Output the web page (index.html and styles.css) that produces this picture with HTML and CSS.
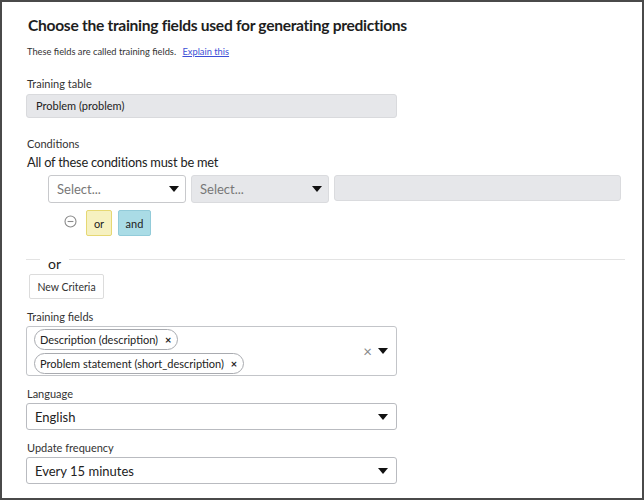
FILE: index.html
```html
<!DOCTYPE html>
<html lang="en">
<head>
  <meta charset="UTF-8">
  <meta name="viewport" content="width=device-width, initial-scale=1">
  <title>Training fields</title>
  <link rel="stylesheet" href="styles.css">
</head>
<body>
  <div class="page">
    <h1>Choose the training fields used for generating predictions</h1>
    <p class="hint">These fields are called training fields. <a href="#">Explain this</a></p>

    <div class="label label-first">Training table</div>
    <div class="field readonly">Problem (problem)</div>

    <div class="label label-cond">Conditions</div>
    <div class="cond-title">All of these conditions must be met</div>

    <div class="cond-row">
      <div class="select small">
        <span class="placeholder">Select...</span>
        <span class="caret"></span>
      </div>
      <div class="select small disabled">
        <span class="placeholder">Select...</span>
        <span class="caret"></span>
      </div>
      <div class="value-box"></div>
    </div>

    <div class="cond-actions">
      <svg class="remove-icon" width="13" height="13" viewBox="0 0 13 13">
        <circle cx="6.5" cy="6.5" r="5.5" fill="none" stroke="#8a8a8a" stroke-width="1.1"/>
        <line x1="3.6" y1="6.5" x2="9.4" y2="6.5" stroke="#8a8a8a" stroke-width="1.1"/>
      </svg>
      <button class="btn-or">or</button>
      <button class="btn-and">and</button>
    </div>

    <div class="divider"><span>or</span></div>
    <button class="btn-new">New Criteria</button>

    <div class="label">Training fields</div>
    <div class="multi">
      <div class="chips">
        <span class="chip">Description (description) <b>×</b></span>
        <span class="chip">Problem statement (short_description) <b>×</b></span>
      </div>
      <span class="clear">×</span>
      <span class="caret"></span>
    </div>

    <div class="label">Language</div>
    <div class="select wide">
      <span>English</span>
      <span class="caret"></span>
    </div>

    <div class="label">Update frequency</div>
    <div class="select wide">
      <span>Every 15 minutes</span>
      <span class="caret"></span>
    </div>
  </div>
</body>
</html>
```

FILE: styles.css
```css
body {
  margin: 0;
  font-family: Lato, 'Open Sans', sans-serif;
  color: #222;
  background: #fff;
}

.page {
  height: 500px;
  box-sizing: border-box;
  border: 2px solid #4a4a4a;
  padding: 13px 17px 0 24px;
}

h1 {
  margin: 0 0 0 2px;
  font-size: 15.6px;
  line-height: 20px;
  font-weight: 700;
  letter-spacing: -0.3px;
  color: #1e1e1e;
}

.hint {
  margin: 10px 0 0 1px;
  font-size: 9.3px;
  line-height: 14px;
  color: #333;
}

.hint a {
  margin-left: 4px;
  color: #3d4fd6;
}

.label {
  margin: 11px 0 0 1px;
  font-size: 11px;
  line-height: 14px;
  color: #333;
}

.label-first {
  margin-top: 18px;
}

.label-cond {
  margin-top: 19px;
}

.field {
  margin-top: 3px;
  width: 371px;
  height: 24px;
  box-sizing: border-box;
  padding: 0 9px;
  font-size: 11px;
  line-height: 22px;
  border-radius: 3px;
}

.readonly {
  background: #e6e7ea;
  border: 1px solid #d9dadd;
}

.cond-title {
  margin: 3px 0 0 1px;
  font-size: 12.8px;
  line-height: 16px;
  letter-spacing: -0.2px;
  color: #222;
}

.cond-row {
  display: flex;
  gap: 5px;
  margin: 5px 0 0 22px;
}

.select {
  display: flex;
  align-items: center;
  justify-content: space-between;
  box-sizing: border-box;
  border: 1px solid #c8c9cc;
  border-radius: 3px;
  background: #fff;
}

.select.small {
  width: 138px;
  height: 28px;
  padding: 0 6px 0 8px;
  font-size: 13px;
}

.select.disabled {
  background: #e6e7ea;
  border-color: #dadbde;
}

.placeholder {
  color: #777;
}

.value-box {
  width: 287px;
  height: 26px;
  box-sizing: border-box;
  background: #e6e7ea;
  border: 1px solid #dadbde;
  border-radius: 3px;
}

.caret {
  width: 0;
  height: 0;
  border-left: 5px solid transparent;
  border-right: 5px solid transparent;
  border-top: 6px solid #111;
}

.cond-actions {
  display: flex;
  align-items: center;
  gap: 6px;
  margin: 7px 0 0 38px;
}

.remove-icon {
  margin: -3px 3px 0 0;
}

.cond-actions button {
  height: 26px;
  padding: 0;
  font-family: inherit;
  font-size: 11px;
  color: #222;
  border-radius: 2px;
}

.btn-or {
  width: 26px;
  background: #f6f1c1;
  border: 1px solid #e6d873;
}

.btn-and {
  width: 33px;
  background: #aadce6;
  border: 1px solid #92cbd9;
}

.divider {
  display: flex;
  margin-top: 23px;
  border-top: 1px solid #e3e3e3;
}

.divider span {
  margin: -4px 0 0 14px;
  padding: 0 8px;
  background: #fff;
  font-size: 14px;
  line-height: 16px;
}

.btn-new {
  display: block;
  margin: 2px 0 0 3px;
  width: 75px;
  height: 25px;
  padding: 0;
  background: #fff;
  border: 1px solid #dcdcdc;
  border-radius: 2px;
  font-family: inherit;
  font-size: 10.5px;
  color: #333;
}

.multi {
  display: flex;
  align-items: center;
  margin-top: 2px;
  width: 371px;
  height: 50px;
  box-sizing: border-box;
  padding: 0 8px 0 7px;
  border: 1px solid #c3c5c9;
  border-radius: 3px;
}

.chips {
  flex: 1;
  display: flex;
  flex-direction: column;
  align-items: flex-start;
  gap: 3px;
}

.chip {
  height: 21px;
  box-sizing: border-box;
  padding: 0 6px 0 5px;
  border: 1px solid #a9abb0;
  border-radius: 11px;
  font-size: 11px;
  line-height: 19px;
  color: #222;
}

.chip b {
  margin-left: 4px;
  font-size: 11px;
}

.clear {
  margin-right: 6px;
  font-size: 15px;
  color: #888;
}

.select.wide {
  margin-top: 2px;
  width: 371px;
  height: 27px;
  padding: 0 8px 0 8px;
  font-size: 13px;
  border-color: #b9bbc0;
}
```
